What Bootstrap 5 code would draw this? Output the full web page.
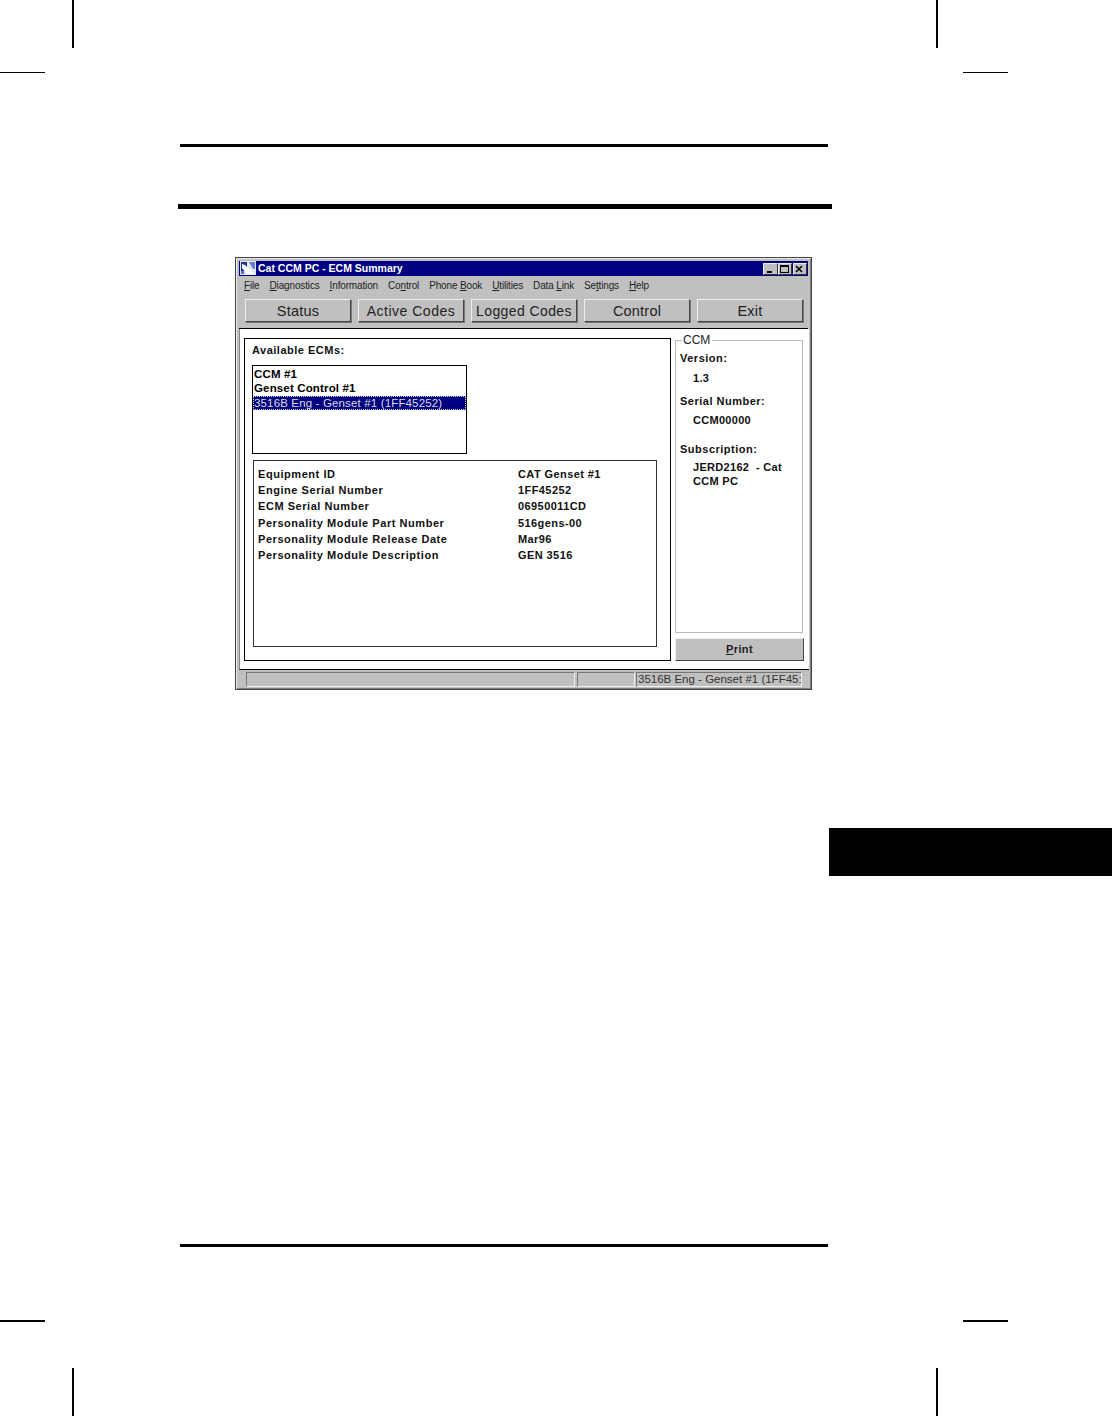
<!doctype html>
<html lang="en"><head><meta charset="utf-8">
<title>Cat CCM PC - ECM Summary</title>
<link rel="stylesheet" href="https://cdn.jsdelivr.net/npm/bootstrap@5.3.0/dist/css/bootstrap.min.css">
<style>
html,body{margin:0;background:#fff;}
.sheet{position:relative;width:1112px;height:1416px;overflow:hidden;background:#fff;padding-top:144px;font-family:"Liberation Sans",Arial,sans-serif;color:#000;}
.crop{position:absolute;background:#000;}
.cv{width:2px;height:48px}.ch{height:1px;width:45px}.ch2{height:2px;width:45px}
.rule-a{height:3px;background:#000;margin:0 284px 0 180px;}
.rule-b{height:5px;background:#000;margin:57px 280px 0 178px;}
.rule-c{height:3px;background:#000;margin:0 284px 0 180px;position:absolute;left:0;right:0;top:1244px;}
.tabblock{position:absolute;left:829px;top:828px;width:283px;height:48px;background:#000;}
.win{width:577px;height:433px;margin:48px 0 0 235px;background:#c0c0c0;border:1px solid #444;padding:3px 3px 2px;display:flex;flex-direction:column;box-shadow:inset 1px 1px 0 #e8e8e8,inset -1px -1px 0 #808080;}
.ttl{height:15px;background:#000080;color:#fff;font-size:10.5px;font-weight:700;letter-spacing:0;line-height:15px;padding-left:1px;flex:none;}
.ttl svg{flex:none;margin-right:2px}
.wbtn{width:14px;height:12px;background:#c0c0c0;border:1px solid;border-color:#eee #333 #333 #eee;display:flex;align-items:center;justify-content:center;}
.wmin{width:15px}
.wctl{margin-right:1px;margin-top:2px}
.wgap{margin-left:1px}
.mnu{height:20px;font-size:10px;color:#222;letter-spacing:-.15px;padding:2px 0 0 5px;gap:10px;flex:none;line-height:15px;}
.mnu u{text-underline-offset:1px}
.tbar{gap:7px;padding:3px 5px 0 6px;flex:none;height:33px;border-bottom:1px solid #000;}
.wb{width:106px;height:23px;flex:none;background:#c0c0c0;border:1px solid;border-color:#eee #444 #444 #eee;box-shadow:1px 1px 0 #777;font-size:14.5px;line-height:22px;text-align:center;color:#222;letter-spacing:.2px;padding:0 0 0 0;border-radius:0;}
.wb.tight{font-size:14px;letter-spacing:.5px;white-space:nowrap}
.wb.lg{letter-spacing:.4px}
.cli{flex:1;background:#fff;display:flex;padding:9px 5px 8px 4px;gap:4px;min-height:0;border-bottom:1px solid #000;border-left:1px solid #888;margin-right:-1px;}
.lft{width:427px;height:323px;border:1px solid #000;padding:5px 13px 13px 7px;display:flex;flex-direction:column;flex:none;}
.avail{font-size:11px;font-weight:700;letter-spacing:.5px;line-height:13px;color:#111;}
.lbox{width:215px;height:89px;border:1px solid #000;margin-top:8px;font-size:11.5px;font-weight:700;line-height:14.4px;padding-top:1px;letter-spacing:.15px;flex:none;}
.lbox div{padding-left:1px;white-space:nowrap}
.lbox .sel{background:#000080;color:#ddd;outline:1px dotted #ddd;outline-offset:-1px;font-weight:400;letter-spacing:.15px;}
.det{margin:6px 0 0 1px;flex:1;border:1px solid #333;padding:5px 4px;font-size:11px;font-weight:700;line-height:16.2px;letter-spacing:.55px;color:#111;}
.det .k{width:260px;flex:none;}
.det .v{letter-spacing:.42px}
.rgt{width:129px;display:flex;flex-direction:column;flex:none;margin-top:2px;}
.grp{position:relative;width:128px;height:293px;border:1px solid #bbb;padding:10px 4px 0 4px;font-size:11px;font-weight:700;letter-spacing:.5px;line-height:14px;color:#111;}
.grp .cap{position:absolute;left:6px;top:-8px;background:#fff;padding:0 2px 0 1px;font-weight:400;font-size:12px;letter-spacing:0;line-height:15px;color:#222;}
.grp p{margin:0}
.grp .val{padding-left:13px;letter-spacing:.3px;}
.gv1{margin-top:6px!important}.gl2{margin-top:9px!important}.gv2{margin-top:5px!important}.gl3{margin-top:15px!important}.gv3{margin-top:4px!important}
.prt{width:129px;height:23px;margin-top:5px;background:#c0c0c0;border:1px solid;border-color:#eee #444 #444 #eee;font-size:11px;font-weight:700;text-align:center;line-height:21px;padding:0;border-radius:0;letter-spacing:.4px;color:#222;}
.stat{height:17px;flex:none;padding:2px 0 0 7px;font-size:11.5px;color:#333;line-height:12px;white-space:nowrap;}
.pn{height:15px;border:1px solid;border-color:#777 #eee #eee #777;flex:none;}
.pn.last{overflow:hidden;padding-left:1px}
</style></head>
<body>
<div class="sheet">
<i class="crop cv" style="left:72px;top:0"></i><i class="crop cv" style="left:936px;top:0"></i>
<i class="crop ch" style="left:0;top:72px"></i><i class="crop ch" style="left:963px;top:72px"></i>
<i class="crop ch2" style="left:0;top:1320px"></i><i class="crop ch2" style="left:963px;top:1320px"></i>
<i class="crop cv" style="left:72px;top:1368px"></i><i class="crop cv" style="left:936px;top:1368px"></i>
<div class="rule-a"></div><div class="rule-b"></div>
<div class="win">
 <div class="ttl d-flex align-items-start">
  <svg width="16" height="14" viewBox="0 0 16 14"><rect width="16" height="14" fill="#dfe6f5"/><path d="M1 1h6v9H1z" fill="#24368c"/><path d="M2 3l3 1 9 9H7L2 7z" fill="#fff"/><path d="M9 1h6v7h-2z" fill="#6a7cc6"/><path d="M1 10h3v3H1z" fill="#5a6fc0"/></svg>
  <span class="flex-grow-1">Cat CCM PC - ECM Summary</span>
  <span class="d-flex wctl">
   <span class="wbtn wmin"><svg width="8" height="8"><rect x="1" y="6" width="5" height="2" fill="#000"/></svg></span>
   <span class="wbtn"><svg width="9" height="8"><rect x=".5" y=".5" width="8" height="7" fill="none" stroke="#000"/><rect x="0" y="0" width="9" height="2"/></svg></span>
   <span class="wbtn wgap"><svg width="8" height="8"><path d="M1 1l6 6M7 1L1 7" stroke="#000" stroke-width="1.6"/></svg></span>
  </span>
 </div>
 <div class="mnu d-flex">
  <span><u>F</u>ile</span><span><u>D</u>iagnostics</span><span><u>I</u>nformation</span><span>Co<u>n</u>trol</span><span>Phone <u>B</u>ook</span><span><u>U</u>tilities</span><span>Data <u>L</u>ink</span><span>Se<u>t</u>tings</span><span><u>H</u>elp</span>
 </div>
 <div class="tbar d-flex">
  <button class="btn wb">Status</button><button class="btn wb tight">Active Codes</button><button class="btn wb tight lg">Logged Codes</button><button class="btn wb">Control</button><button class="btn wb">Exit</button>
 </div>
 <div class="cli">
  <div class="lft">
   <div class="avail">Available ECMs:</div>
   <div class="lbox"><div>CCM #1</div><div>Genset Control #1</div><div class="sel">3516B Eng - Genset #1 (1FF45252)</div></div>
   <div class="det">
    <div class="d-flex"><span class="k">Equipment ID</span><span class="v">CAT Genset #1</span></div>
    <div class="d-flex"><span class="k">Engine Serial Number</span><span class="v">1FF45252</span></div>
    <div class="d-flex"><span class="k">ECM Serial Number</span><span class="v">06950011CD</span></div>
    <div class="d-flex"><span class="k">Personality Module Part Number</span><span class="v">516gens-00</span></div>
    <div class="d-flex"><span class="k">Personality Module Release Date</span><span class="v">Mar96</span></div>
    <div class="d-flex"><span class="k">Personality Module Description</span><span class="v">GEN 3516</span></div>
   </div>
  </div>
  <div class="rgt">
   <div class="grp"><span class="cap">CCM</span>
    <p>Version:</p><p class="val gv1">1.3</p>
    <p class="gl2">Serial Number:</p><p class="val gv2">CCM00000</p>
    <p class="gl3">Subscription:</p><p class="val gv3">JERD2162&nbsp; - Cat<br>CCM PC</p>
   </div>
   <button class="btn prt"><u>P</u>rint</button>
  </div>
 </div>
 <div class="stat d-flex">
  <div class="pn" style="width:329px"></div><div class="pn" style="width:58px;margin-left:2px"></div><div class="pn last" style="width:166px;margin-left:1px">3516B Eng - Genset #1 (1FF45:</div>
 </div>
</div>
<div class="rule-c"></div>
<div class="tabblock"></div>
</div>
</body></html>
